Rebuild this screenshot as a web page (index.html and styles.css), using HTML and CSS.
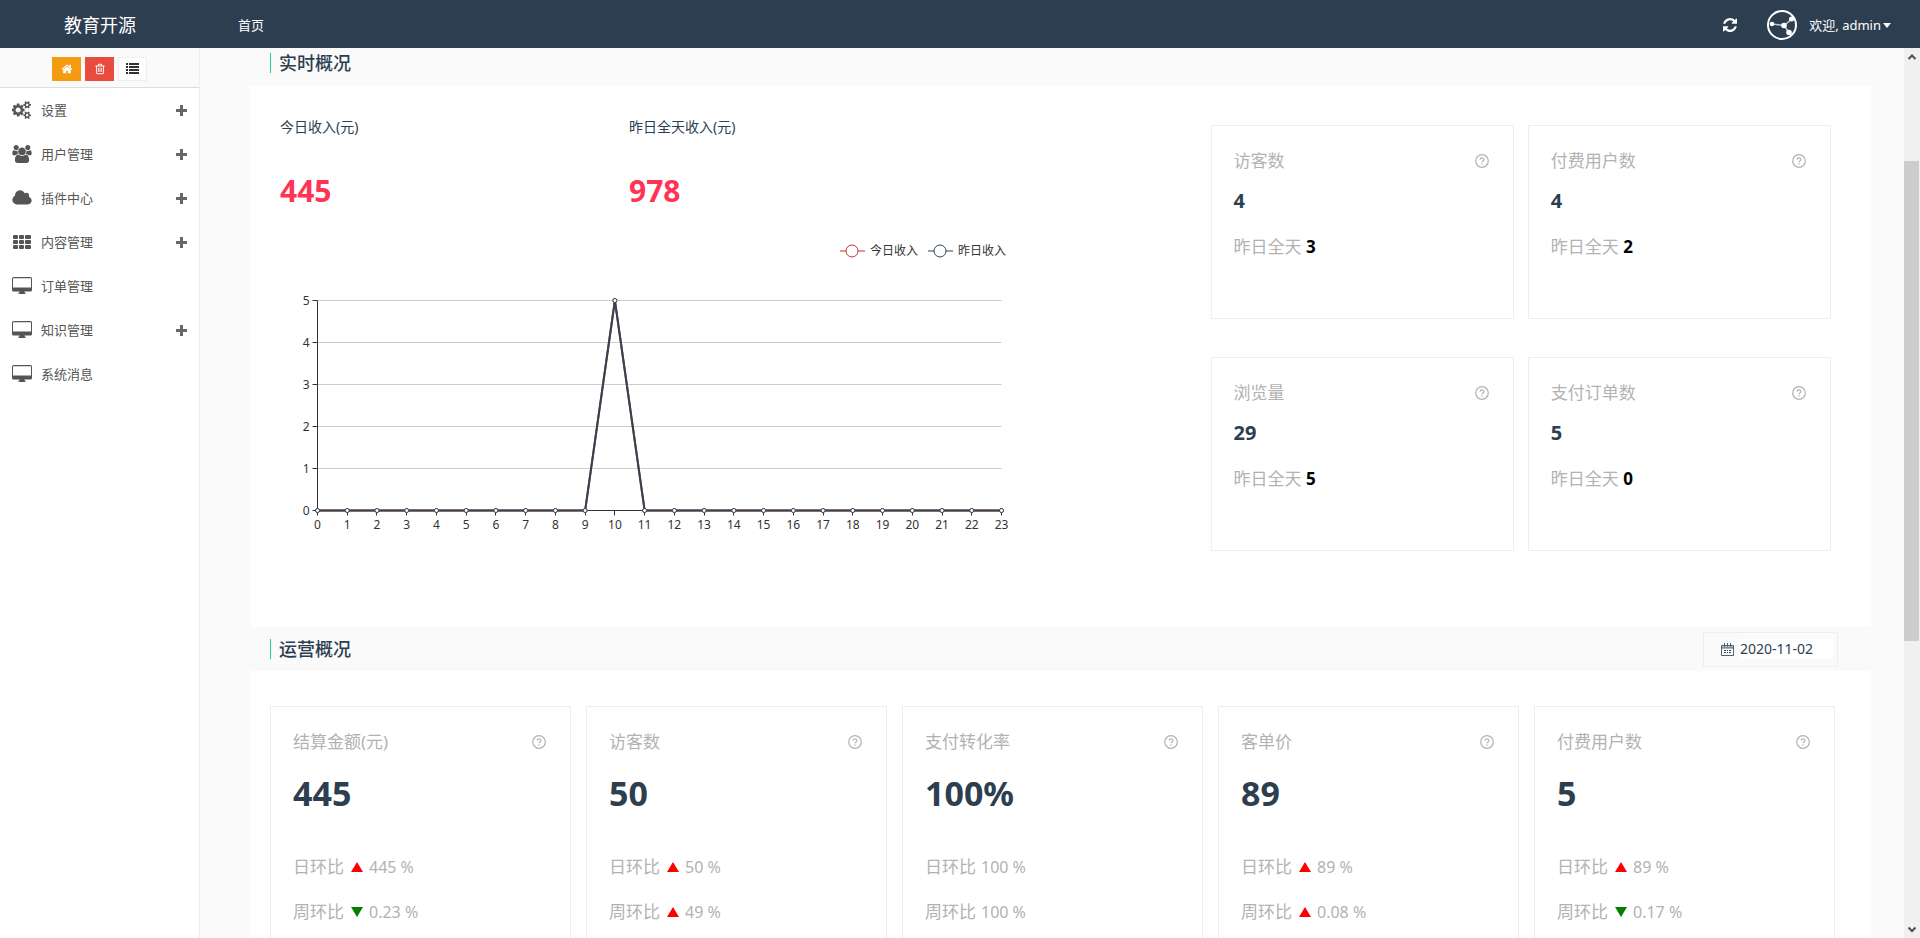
FILE: index.html
```html
<!DOCTYPE html>
<html lang="zh-CN">
<head>
<meta charset="utf-8">
<title>教育开源</title>
<link rel="stylesheet" href="styles.css">
</head>
<body>
<svg class="sprite" aria-hidden="true">
  <symbol id="i-home" viewBox="0 0 1792 1792"><path d="M1472 992v480q0 26-19 45t-45 19h-384v-384h-256v384h-384q-26 0-45-19t-19-45v-480q0-1 .5-3t.5-3l575-474 575 474q1 2 1 6zm223-69l-62 74q-8 9-21 11h-3q-13 0-21-7l-692-577-692 577q-12 8-24 7-13-2-21-11l-62-74q-8-10-7-23.500t11-21.500l719-599q32-26 76-26t76 26l244 204v-195q0-14 9-23t23-9h192q14 0 23 9t9 23v408l219 182q10 8 11 21.500t-7 23.500z"/></symbol>
  <symbol id="i-trash" viewBox="0 0 1792 1792"><path d="M704 736v576q0 14-9 23t-23 9h-64q-14 0-23-9t-9-23v-576q0-14 9-23t23-9h64q14 0 23 9t9 23zm256 0v576q0 14-9 23t-23 9h-64q-14 0-23-9t-9-23v-576q0-14 9-23t23-9h64q14 0 23 9t9 23zm256 0v576q0 14-9 23t-23 9h-64q-14 0-23-9t-9-23v-576q0-14 9-23t23-9h64q14 0 23 9t9 23zm128 724v-948h-896v948q0 22 7 40.500t14.500 27 10.500 8.500h832q3 0 10.500-8.500t14.500-27 7-40.500zm-672-1076h448l-48-117q-7-9-17-11h-317q-10 2-17 11zm928 32v64q0 14-9 23t-23 9h-96v948q0 83-47 143.500t-113 60.500h-832q-66 0-113-58.500t-47-141.500v-952h-96q-14 0-23-9t-9-23v-64q0-14 9-23t23-9h309l70-167q15-37 54-63t79-26h320q40 0 79 26t54 63l70 167h309q14 0 23 9t9 23z"/></symbol>
  <symbol id="i-list" viewBox="0 0 13 11"><path d="M0 0h2v2H0zM3 0h10v2H3zM0 3h2v2H0zM3 3h10v2H3zM0 6h2v2H0zM3 6h10v2H3zM0 9h2v2H0zM3 9h10v2H3z"/></symbol>
  <symbol id="i-cogs" viewBox="0 0 1920 1792"><path d="M832 896q0-106-75-181t-181-75-181 75-75 181 75 181 181 75 181-75 75-181zm768 512q0-52-38-90t-90-38-90 38-38 90q0 53 37.500 90.500t90.500 37.500 90.500-37.500 37.500-90.500zm0-1024q0-52-38-90t-90-38-90 38-38 90q0 53 37.500 90.500t90.500 37.500 90.500-37.500 37.500-90.500zm-384 421v185q0 10-7 19.500t-16 10.500l-155 24q-11 35-32 76 34 48 90 115 7 11 7 20 0 12-7 19-23 30-82.500 89.500t-78.500 59.500q-11 0-21-7l-115-90q-37 19-77 31-11 108-23 155-7 24-30 24h-186q-11 0-20-7.500t-10-17.500l-23-153q-34-10-75-31l-118 89q-7 7-20 7-11 0-21-8-144-133-144-160 0-9 7-19 10-14 41-53t47-61q-23-44-35-82l-152-24q-10-1-17-9.500t-7-19.500v-185q0-10 7-19.500t16-10.500l155-24q11-35 32-76-34-48-90-115-7-11-7-20 0-12 7-20 22-30 82-89t79-59q11 0 21 7l115 90q34-18 77-32 11-108 23-154 7-24 30-24h186q11 0 20 7.500t10 17.500l23 153q34 10 75 31l118-89q8-7 20-7 11 0 21 8 144 133 144 160 0 8-7 19-12 16-42 54t-45 60q23 48 34 82l152 23q10 2 17 10.500t7 19.500zm640 533v140q0 16-149 31-12 27-30 52 51 113 51 138 0 4-4 7-122 71-124 71-8 0-46-47t-52-68q-20 2-30 2t-30-2q-14 21-52 68t-46 47q-2 0-124-71-4-3-4-7 0-25 51-138-18-25-30-52-149-15-149-31v-140q0-16 149-31 13-29 30-52-51-113-51-138 0-4 4-7 4-2 35-20t59-34 30-16q8 0 46 46.500t52 67.500q20-2 30-2t30 2q51-71 92-112l6-2q4 0 124 70 4 3 4 7 0 25-51 138 17 23 30 52 149 15 149 31zm0-1024v140q0 16-149 31-12 27-30 52 51 113 51 138 0 4-4 7-122 71-124 71-8 0-46-47t-52-68q-20 2-30 2t-30-2q-14 21-52 68t-46 47q-2 0-124-71-4-3-4-7 0-25 51-138-18-25-30-52-149-15-149-31v-140q0-16 149-31 13-29 30-52-51-113-51-138 0-4 4-7 4-2 35-20t59-34 30-16q8 0 46 46.500t52 67.500q20-2 30-2t30 2q51-71 92-112l6-2q4 0 124 70 4 3 4 7 0 25-51 138 17 23 30 52 149 15 149 31z"/></symbol>
  <symbol id="i-users" viewBox="0 0 1920 1792"><path d="M593 896q-162 5-265 128h-134q-82 0-138-40.500t-56-118.500q0-353 124-353 6 0 43.500 21t97.500 42.500 119 21.500q67 0 133-23-5 37-5 66 0 139 81 256zm1071 637q0 120-73 189.500t-194 69.500h-874q-121 0-194-69.500t-73-189.500q0-53 3.500-103.500t14-109 26.500-108.500 43-97.500 62-81 85.500-53.500 111.500-20q10 0 43 21.500t73 48 107 48 135 21.500 135-21.500 107-48 73-48 43-21.500q61 0 111.500 20t85.500 53.500 62 81 43 97.500 26.500 108.500 14 109 3.500 103.500zm-1024-1277q0 106-75 181t-181 75-181-75-75-181 75-181 181-75 181 75 75 181zm704 384q0 159-112.500 271.500t-271.500 112.500-271.500-112.500-112.500-271.500 112.500-271.500 271.500-112.500 271.500 112.500 112.500 271.500zm576 225q0 78-56 118.500t-138 40.500h-134q-103-123-265-128 81-117 81-256 0-29-5-66 66 23 133 23 59 0 119-21.500t97.500-42.500 43.500-21q124 0 124 353zm-128-609q0 106-75 181t-181 75-181-75-75-181 75-181 181-75 181 75 75 181z"/></symbol>
  <symbol id="i-cloud" viewBox="0 0 1920 1792"><path d="M1920 1152q0 159-112.500 271.500t-271.500 112.500h-1088q-185 0-316.500-131.500t-131.500-316.500q0-132 71-241.500t187-163.500q-2-28-2-43 0-212 150-362t362-150q158 0 286.500 88t187.500 230q70-62 166-62 106 0 181 75t75 181q0 75-41 138 129 30 213 134.500t84 239.500z"/></symbol>
  <symbol id="i-grid" viewBox="0 0 20 18"><g><rect x="1" y="2" width="5" height="4" rx="1"/><rect x="7" y="2" width="5" height="4" rx="1"/><rect x="13" y="2" width="6" height="4" rx="1"/><rect x="1" y="7" width="5" height="4" rx="1"/><rect x="7" y="7" width="5" height="4" rx="1"/><rect x="13" y="7" width="6" height="4" rx="1"/><rect x="1" y="12" width="5" height="4" rx="1"/><rect x="7" y="12" width="5" height="4" rx="1"/><rect x="13" y="12" width="6" height="4" rx="1"/></g></symbol>
  <symbol id="i-desktop" viewBox="0 0 20 18"><path fill-rule="evenodd" d="M1.500 0h17Q20 0 20 1.500v11.500q0 1.500-1.500 1.500H12.500v1h1V17h-7v-1.500h1v-1h-6Q0 14.500 0 13V1.500Q0 0 1.500 0zM1 1.300V10.500h18V1.300z"/></symbol>
  <symbol id="i-plus" viewBox="0 0 11 11"><path d="M4 0h3v4h4v3H7v4H4V7H0V4h4z"/></symbol>
  <symbol id="i-refresh" viewBox="128 128 1536 1536"><path d="M1639 1056q0 5-1 7-64 268-268 434.500t-478 166.500q-146 0-282.500-55t-243.500-157l-129 129q-19 19-45 19t-45-19-19-45v-448q0-26 19-45t45-19h448q26 0 45 19t19 45-19 45l-137 137q71 66 161 102t187 36q134 0 250-65t186-179q11-17 53-117 8-23 30-23h192q13 0 22.500 9.500t9.500 22.500zm25-800v448q0 26-19 45t-45 19h-448q-26 0-45-19t-19-45 19-45l138-138q-148-137-349-137-134 0-250 65t-186 179q-11 17-53 117-8 23-30 23h-199q-13 0-22.500-9.500t-9.500-22.500v-7q65-268 270-434.500t480-166.500q146 0 284 55.500t245 156.500l130-129q19-19 45-19t45 19 19 45z"/></symbol>
  <symbol id="i-help" viewBox="0 0 14 14"><circle cx="7" cy="7" r="6.300" fill="none" stroke="currentColor" stroke-width="1.200"/><path d="M5.100 5.700Q5.200 3.900 7 3.900T8.900 5.500Q8.900 6.300 8 6.900T7 8.300" fill="none" stroke="currentColor" stroke-width="1.200"/><rect x="6.400" y="9.200" width="1.200" height="1.200"/></symbol>
  <symbol id="i-calendar" viewBox="0 0 13 13"><path d="M.5 2.500h12v10H.5zM.5 5h12M3.500 0v3.500M6.500 0v3.500M9.500 0v3.500" fill="none" stroke="currentColor" stroke-opacity=".8"/><path d="M1 3h11v2H1z" opacity=".3"/><path d="M3 7h2v1H3zM6 7h1v1H6zM8 7h2v1H8zM3 9h2v1H3zM6 9h1v1H6zM8 9h2v1H8z"/></symbol>
</svg>

<header class="topbar">
  <a class="brand" href="#">教育开源</a>
  <nav class="topnav"><a href="#">首页</a></nav>
  <button class="refresh" type="button" aria-label="刷新"><svg><use href="#i-refresh"/></svg></button>
  <button class="account" type="button">
    <svg class="avatar" viewBox="0 0 30 30"><circle cx="15" cy="15" r="14" fill="none" stroke="#fff" stroke-width="2"/><path d="M5 14l12 1.500L25 9M17 15.500L22 22.500" fill="none" stroke="#c5cbd2" stroke-width="1.500"/><g fill="#fff"><circle cx="5" cy="14" r="2.300"/><circle cx="17" cy="15.500" r="2.800"/><circle cx="24.500" cy="9" r="2.500"/><circle cx="22" cy="22.500" r="2.800"/></g></svg>
    <span>欢迎, admin</span><i class="caret"></i>
  </button>
</header>

<div class="layout">
  <aside class="sidebar">
    <div class="shortcuts">
      <button class="sc sc-home" type="button" aria-label="主页"><svg><use href="#i-home"/></svg></button>
      <button class="sc sc-trash" type="button" aria-label="清除"><svg><use href="#i-trash"/></svg></button>
      <button class="sc sc-list" type="button" aria-label="菜单"><svg><use href="#i-list"/></svg></button>
    </div>
    <nav class="menu">
      <a href="#"><svg class="ico"><use href="#i-cogs"/></svg><span>设置</span><svg class="plus"><use href="#i-plus"/></svg></a>
      <a href="#"><svg class="ico"><use href="#i-users"/></svg><span>用户管理</span><svg class="plus"><use href="#i-plus"/></svg></a>
      <a href="#"><svg class="ico"><use href="#i-cloud"/></svg><span>插件中心</span><svg class="plus"><use href="#i-plus"/></svg></a>
      <a href="#"><svg class="ico"><use href="#i-grid"/></svg><span>内容管理</span><svg class="plus"><use href="#i-plus"/></svg></a>
      <a href="#"><svg class="ico"><use href="#i-desktop"/></svg><span>订单管理</span></a>
      <a href="#"><svg class="ico"><use href="#i-desktop"/></svg><span>知识管理</span><svg class="plus"><use href="#i-plus"/></svg></a>
      <a href="#"><svg class="ico"><use href="#i-desktop"/></svg><span>系统消息</span></a>
    </nav>
  </aside>

  <main class="content">
    <div class="section-head section-head-top"><h2>实时概况</h2></div>
    <section class="panel realtime">
      <div class="income-side">
        <div class="income">
          <div><p class="income-label">今日收入(元)</p><p class="income-value">445</p></div>
          <div><p class="income-label">昨日全天收入(元)</p><p class="income-value">978</p></div>
        </div>
        <svg class="chart" id="chart" viewBox="0 0 740 310" role="img" aria-label="今日收入与昨日收入"></svg>
      </div>
      <div class="stats">
        <article class="card"><header><h3>访客数</h3><svg class="help"><use href="#i-help"/></svg></header><p class="num">4</p><p class="sub">昨日全天 <b>3</b></p></article>
        <article class="card"><header><h3>付费用户数</h3><svg class="help"><use href="#i-help"/></svg></header><p class="num">4</p><p class="sub">昨日全天 <b>2</b></p></article>
        <article class="card"><header><h3>浏览量</h3><svg class="help"><use href="#i-help"/></svg></header><p class="num">29</p><p class="sub">昨日全天 <b>5</b></p></article>
        <article class="card"><header><h3>支付订单数</h3><svg class="help"><use href="#i-help"/></svg></header><p class="num">5</p><p class="sub">昨日全天 <b>0</b></p></article>
      </div>
    </section>

    <div class="section-head"><h2>运营概况</h2>
      <label class="date"><svg><use href="#i-calendar"/></svg><input type="text" value="2020-11-02" aria-label="日期"></label>
    </div>
    <section class="panel operation">
      <article class="card"><header><h3>结算金额(元)</h3><svg class="help"><use href="#i-help"/></svg></header><p class="big">445</p><p class="rate">日环比<i class="up"></i><span>445 %</span></p><p class="rate">周环比<i class="down"></i><span>0.23 %</span></p></article>
      <article class="card"><header><h3>访客数</h3><svg class="help"><use href="#i-help"/></svg></header><p class="big">50</p><p class="rate">日环比<i class="up"></i><span>50 %</span></p><p class="rate">周环比<i class="up"></i><span>49 %</span></p></article>
      <article class="card"><header><h3>支付转化率</h3><svg class="help"><use href="#i-help"/></svg></header><p class="big">100%</p><p class="rate">日环比<span>100 %</span></p><p class="rate">周环比<span>100 %</span></p></article>
      <article class="card"><header><h3>客单价</h3><svg class="help"><use href="#i-help"/></svg></header><p class="big">89</p><p class="rate">日环比<i class="up"></i><span>89 %</span></p><p class="rate">周环比<i class="up"></i><span>0.08 %</span></p></article>
      <article class="card"><header><h3>付费用户数</h3><svg class="help"><use href="#i-help"/></svg></header><p class="big">5</p><p class="rate">日环比<i class="up"></i><span>89 %</span></p><p class="rate">周环比<i class="down"></i><span>0.17 %</span></p></article>
    </section>
  </main>

  <div class="scrollbar" aria-hidden="true">
    <svg viewBox="0 0 16 16"><path d="M4.500 10L8 6.500l3.500 3.500"/></svg>
    <div class="track"><div class="thumb"></div></div>
    <svg viewBox="0 0 16 16"><path d="M4.500 6.500L8 10l3.500-3.500"/></svg>
  </div>
</div>
<script src="chart.js"></script>
</body>
</html>
```
FILE: styles.css
```css
* { box-sizing: border-box; }

body {
  margin: 0;
  height: 100vh;
  overflow: hidden;
  display: flex;
  flex-direction: column;
  background: #fff;
  color: #2c3e50;
  font-family: "Noto Sans", "Noto Sans CJK SC", sans-serif;
  font-size: 14px;
  line-height: 20px;
}

h2, h3, p { margin: 0; font-weight: 400; }
a { color: inherit; text-decoration: none; }
button { border: 0; padding: 0; background: none; color: inherit; font: inherit; cursor: pointer; }
svg { fill: currentColor; display: block; flex: none; }
.sprite { position: absolute; width: 0; height: 0; }

.topbar {
  flex: none;
  height: 48px;
  padding: 2px 29px 0 0;
  display: flex;
  align-items: center;
  background: #2c3e50;
  color: #fff;
  font-size: 13px;
}
.brand { width: 200px; text-align: center; font-size: 18px; line-height: 24px; }
.topnav { flex: 1; padding-left: 38px; }
.refresh svg { width: 14px; height: 14px; }
.refresh { margin-right: 30px; }
.account { display: flex; align-items: center; }
.avatar { width: 30px; height: 30px; margin-right: 12px; }
.caret { margin-left: 2px; border: 4px solid transparent; border-top: 5px solid #fff; border-bottom: 0; }

.layout { flex: 1; min-height: 0; display: flex; }

.sidebar { width: 200px; flex: none; border-right: 1px solid #eee; background: #fff; }
.shortcuts {
  height: 40px;
  padding-top: 2px;
  display: flex;
  justify-content: center;
  align-items: center;
  gap: 4px;
  background: #fafafa;
  border-bottom: 1px solid #ddd;
}
.sc { height: 24px; width: 29px; display: grid; place-items: center; color: #fff; }
.sc svg { width: 12px; height: 12px; }
.sc-home { background: #f39c12; }
.sc-trash { background: #e74c3c; }
.sc-list { background: #fff; border: 1px solid #eee; color: #333; }
.sc-list svg { width: 13px; height: 11px; }

.menu { color: #555; font-size: 13px; }
.menu a { height: 44px; padding: 0 12px; display: flex; align-items: center; }
.menu span { flex: 1; }
.ico { width: 20px; height: 18px; margin-right: 9px; }
.plus { width: 11px; height: 11px; color: #666; }

.content { flex: 1; min-width: 0; overflow: hidden; padding: 0 33px 0 50px; background: #fafafa; }
.section-head { height: 44px; padding: 0 33px 0 20px; display: flex; align-items: center; justify-content: space-between; }
.section-head-top { height: 38px; padding-bottom: 8px; }
.section-head h2 { padding-left: 8px; border-left: 1px solid #1dd1a1; font-size: 18px; font-weight: 500; line-height: 20px; }
.date { height: 35px; padding: 0 4px 0 17px; display: flex; align-items: center; gap: 5px; border: 1px solid #eee; }
.date svg { width: 13px; height: 13px; }
.date input { width: 94px; height: 20px; padding: 0 1px; border: 0; background: #fff; color: #2c3e50; font: inherit; }

.panel { background: #fff; }
.realtime { padding: 31px 40px 76px 30px; display: grid; grid-template-columns: 3fr 2fr; }
.income { display: grid; grid-template-columns: 3fr 5fr; }
.income-value { margin-top: 34px; color: #ff3355; font-size: 30px; font-weight: 700; line-height: 40px; }
.chart { width: 740px; max-width: 100%; margin-top: 19px; font-size: 12px; }
.axis { fill: none; stroke: #333; }
.split { stroke: #ccc; }
.tick { fill: #333; }
.center { text-anchor: middle; }
.end { text-anchor: end; }
.today { fill: none; stroke: #c23531; }
.yesterday { fill: none; stroke: #2f4554; }
.line { stroke-width: 2; }
.dot, .mark { fill: #fff; }

.stats { margin-top: 8px; display: grid; grid-template-columns: 1fr 1fr; gap: 38px 14px; align-content: start; }
.card { border: 1px solid #eee; padding: 23px 24px 0 22px; color: #b2b2b2; font-size: 17px; line-height: 24px; }
.stats .card { height: 194px; }
.card header { display: flex; align-items: center; justify-content: space-between; }
.card h3 { font-size: 17px; }
.help { width: 14px; height: 14px; }
.num { margin-top: 16px; color: #2c3e50; font-size: 20px; font-weight: 700; }
.sub { margin-top: 22px; }
.sub b { color: #000; }

.operation { padding: 35px 36px 40px 20px; display: grid; grid-template-columns: repeat(5, 1fr); gap: 15px; }
.operation .card { padding-bottom: 40px; }
.big { margin-top: 17px; color: #2c3e50; font-size: 34px; font-weight: 700; line-height: 44px; }
.rate { margin-top: 21px; display: flex; align-items: center; }
.big + .rate { margin-top: 40px; }
.rate span { margin-left: 5px; font-size: 16px; }
.rate i { margin: 0 1px 0 7px; border: 6px solid transparent; }
.rate .up { border-bottom: 10px solid #f00; border-top: 0; }
.rate .down { border-top: 10px solid #008000; border-bottom: 0; }

.scrollbar { flex: none; width: 16px; display: flex; flex-direction: column; background: #f0f0f0; }
.scrollbar svg { width: 16px; height: 18px; fill: none; stroke: #505050; stroke-width: 2; }
.track { flex: 1; padding-right: 1px; display: flex; flex-direction: column; }
.track::before { content: ""; flex: 95; }
.track::after { content: ""; flex: 279; }
.thumb { flex: 480; background: #cdcdcd; }
```
FILE: chart.js
```js
// Hourly income line chart
var hours = 24, max = 5;
var left = 37.5, right = 721.5, top0 = 70.5, bottom = 280.5;
var data = [];
for (var h = 0; h < hours; h++) data.push(h === 10 ? 5 : 0);

function px(i) { return left + (right - left) * i / (hours - 1); }
function py(v) { return bottom - (bottom - top0) * v / max; }
function snap(v) { return Math.floor(v) + 0.5; }

var out = '';
for (var v = 0; v <= max; v++) {
  var y = snap(py(v));
  if (v) out += '<path class="split" d="M' + left + ' ' + y + 'H' + right + '"/>';
  out += '<path class="axis" d="M' + (left - 5) + ' ' + y + 'H' + left + '"/>';
  out += '<text class="tick end" x="' + (left - 8) + '" y="' + (y + 4) + '">' + v + '</text>';
}
out += '<path class="axis" d="M' + left + ' ' + top0 + 'V' + bottom + 'H' + right + '"/>';
for (var i = 0; i < hours; i++) {
  out += '<path class="axis" d="M' + snap(px(i)) + ' ' + bottom + 'v5"/>';
  out += '<text class="tick center" x="' + px(i) + '" y="' + (bottom + 18) + '">' + i + '</text>';
}
var points = data.map(function (d, i) { return px(i) + ',' + py(d); }).join(' ');
['today', 'yesterday'].forEach(function (name) {
  out += '<polyline class="line ' + name + '" points="' + points + '"/>';
  data.forEach(function (d, i) {
    out += '<circle class="' + name + ' dot" cx="' + px(i) + '" cy="' + py(d) + '" r="2"/>';
  });
});
[['today', 560, '今日收入'], ['yesterday', 648, '昨日收入']].forEach(function (l) {
  out += '<path class="' + l[0] + '" d="M' + l[1] + ' 21h25"/>';
  out += '<circle class="' + l[0] + ' mark" cx="' + (l[1] + 12) + '" cy="21" r="6"/>';
  out += '<text class="tick" x="' + (l[1] + 30) + '" y="25">' + l[2] + '</text>';
});
document.getElementById('chart').innerHTML = out;
```
